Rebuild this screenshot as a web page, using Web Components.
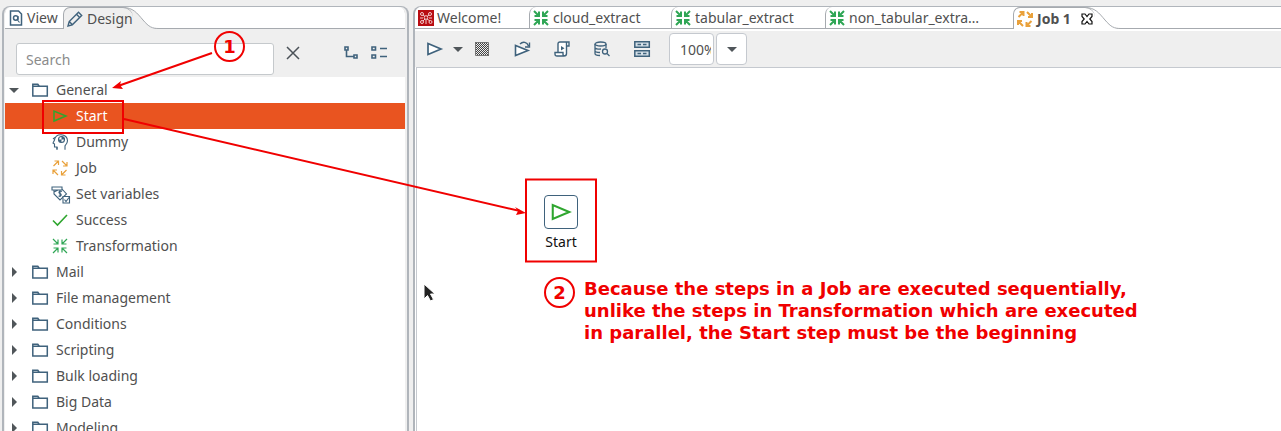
<!DOCTYPE html>
<html lang="en">
<head>
<meta charset="utf-8">
<title>Job designer</title>
<style>
  html, body { height: 100%; }
  body { margin: 0; overflow: hidden; background: #efefef; color: #505050; font: 14px/20px "Noto Sans", "Open Sans", sans-serif; }
</style>
</head>
<body>
<job-designer></job-designer>
<script>
const NAVY = '#3f627c';
const ICONS = {
  folder: `<path d="M.8 14V2.2h5l1.5 2h8V14z M.8 4.2h6" fill="none" stroke="${NAVY}" stroke-width="1.5"/>`,
  start: '<path d="M2 3v10l12-5z" fill="none" stroke="#2fa62f" stroke-width="1.5"/>',
  converge: '<g fill="none" stroke="#2fa655" stroke-width="var(--weight,1.2)"><path d="M1 1l5 5M6 1.5V6H1.5M15 1l-5 5M10 1.5V6h4.5M1 15l5-5M6 14.5V10H1.5M15 15l-5-5M10 14.5V10h4.5"/></g>',
  job: '<g fill="none" stroke="#e9a13b" stroke-width="var(--weight,1.2)"><path d="M1.5 6l5-5M2.5 1h4v4M10 1l5 5M15 2v4h-4M6 15l-5-5M1 14v-4h4M14.5 10l-5 5M9.5 11v4h4"/></g>',
  success: '<path d="M1 8.5l4.500 4.500L15 3" fill="none" stroke="#2fa62f" stroke-width="1.6"/>',
  dummy: `<g fill="none" stroke="${NAVY}" stroke-width="1.1"><path d="M5 16v-3H2.500v-3L1 9l1.500-3C3 2 6 .8 9 .8c4 0 6.500 2.500 6.500 6 0 2.500-1.500 4-2.500 5v4"/><circle cx="9.5" cy="5.5" r="3"/><path d="M5 13v2M3 3.500L1 5"/></g><path d="M9.500 5.500v-3a3 3 0 0 1 3 3zM9.500 5.500v3a3 3 0 0 1-3-3z" fill="${NAVY}"/>`,
  variables: `<g fill="none" stroke="${NAVY}" stroke-width="1.1"><path d="M0 1h10v3H0zM2 4v4l6 6 6.500-6L10 3M2 6l4-2"/><path d="M10 5.500C7 4 6 7 8 7.500s1.500 3.500-1.500 2.500M8 4v7"/><path d="M11 10.500h6.500V17H11z" fill="#fff"/><path d="M12.500 13.500l1.500 2 3-4"/></g>`,
  view: `<g fill="none" stroke="${NAVY}" stroke-width="1.5"><path d="M2.500 1h8l3 3v11h-11z"/><circle cx="7.7" cy="8" r="2.2"/><path d="M9.500 10l2 2.500M10 6v4" stroke-width="1.2"/></g>`,
  pencil: `<path d="M1 15l1.200-4.500L11.500 1.200l3.200 3.200L5.300 13.800zM9.500 3.200l3.200 3.200M2.200 10.500l3 3" fill="none" stroke="${NAVY}" stroke-width="1.4"/>`,
  clear: '<path d="M2 2l12 12M14 2L2 14" stroke="#4b5258" stroke-width="1.5"/>',
  hierarchy: `<g fill="none" stroke="${NAVY}" stroke-width="1.6"><path d="M2 2h3v3H2zM11 10h3v3h-3zM3.500 5v6.500H11"/></g>`,
  list: `<g fill="none" stroke="${NAVY}" stroke-width="1.6"><path d="M1 2h3.500v3H1zM1 10h3.500v3H1zM9 3.500h7M9 11.500h7"/></g>`,
  run: `<path d="M2 2.500v11L15 8z" fill="#fff" stroke="${NAVY}" stroke-width="1.7"/>`,
  replay: `<path d="M1.500 4.500v10l12.500-5z" fill="#fff" stroke="${NAVY}" stroke-width="1.6"/><path d="M6 3c3-3 7-2 8.500 2M15.500 1.500V6H11" fill="none" stroke="${NAVY}" stroke-width="1.4"/>`,
  script: `<path d="M4 11V3q0-2 2-2h9v4h-2.500v7.500q0 2.500-2.500 2.500H3q-2 0-2-2v-1.500h8V13q0 2 1.500 2M12.500 5V1" fill="#fff" stroke="${NAVY}" stroke-width="1.4"/><path d="M7 5v4.500l3.500-2.200z" fill="${NAVY}"/>`,
  database: `<g fill="none" stroke="${NAVY}" stroke-width="1.3"><ellipse cx="6.5" cy="3" rx="5.5" ry="2"/><path d="M1 3v9.500c0 1 2 2 5 2M12 3v4M1 6.500c0 1 3 2 6 1.500M1 9.800c0 1 2 1.700 5 1.700"/><circle cx="11" cy="10.5" r="2.5"/><path d="M13 12.500l2.500 2.500"/></g>`,
  grid: `<g fill="#d5e0e8" stroke="${NAVY}" stroke-width="1.5"><path d="M.8.8h14.500v5.400H.8zM.8 9.800h14.500v5.400H.8z"/><path d="M3.500 3.500H7M9 3.500h3.500M3.500 12.500H7M9 12.500h3.500"/></g>`,
  stop: '<defs><pattern id="p" width="2" height="2" patternUnits="userSpaceOnUse"><path d="M0 0h1v1H0zM1 1h1v1H1z" fill="#444"/></pattern></defs><path d="M1 1h14v14H1z" fill="url(#p)" shape-rendering="crispEdges"/><path d="M1.500 1.500h13v13h-13z" fill="none" stroke="#777"/>',
  down: '<path d="M3 6h10l-5 5z" fill="#50565a"/>',
  right: '<path d="M6 3v10l5-5z" fill="#50565a"/>',
  close: '<path d="M3 3h3l2 2.500L10 3h3v2.500L10.800 8 13 10.500V13h-3L8 10.500 6 13H3v-2.500L5.200 8 3 5.500z" fill="#fff" stroke="#111" stroke-width="1.2"/>',
  welcome: '<path d="M0 0h16v16H0z" fill="#b90d12"/><g fill="none" stroke="#f3cccd"><circle cx="4" cy="4" r="1.5"/><circle cx="12" cy="4" r="1.5"/><circle cx="8" cy="7.5" r="1.8"/><circle cx="4" cy="12" r="1.5"/><circle cx="12.5" cy="12" r="1.5"/><path d="M5 5l2 1.500M11 5L9 6.500M7 9l-2 2M9 9l3 2M2 8h3M11 8h3M8 9.500V14"/></g>'
};

// Registers an element; setup runs on the cloned content before it is connected.
function define(name, css, html, setup) {
  const template = document.createElement('template');
  template.innerHTML = `<style>*{box-sizing:border-box}button{font:inherit;color:inherit;background:none;border:0;padding:0}${css}</style>${html}`;
  customElements.define(name, class extends HTMLElement {
    connectedCallback() {
      if (this.shadowRoot) return;
      const content = template.content.cloneNode(true);
      if (setup) setup(this, content);
      this.attachShadow({ mode: 'open' }).append(content);
    }
  });
}

define('ui-icon', ':host{display:block;flex:none;width:16px;height:16px}svg{display:block;width:100%;height:100%;overflow:visible}',
  '<svg viewBox="0 0 16 16" aria-hidden="true"></svg>',
  (host, root) => { root.querySelector('svg').innerHTML = ICONS[host.getAttribute('name')]; });

define('tab-item', `
  :host{display:flex;flex:none;height:22px;width:var(--tab-width,auto)}
  button{display:flex;align-items:center;gap:4px;padding:0 0 0 3px;flex:1;min-width:0;white-space:nowrap;border-left:1px solid #a6aaaf;border-radius:7px 0 0 0;text-align:left}
  :host([first]) button{border-left-color:transparent;padding-left:1px;gap:3px}
  :host([active]) button{background:var(--fill);border-top:1px solid #a6aaaf;position:relative}
  span{position:relative;z-index:1}
  ui-icon{z-index:1}
  ui-icon.close{margin-left:4px}
  .tail{display:none;flex:none;width:36px;height:22px;margin-left:-10px}
  :host([active]) .tail{display:block}
  :host(:not([closable])) .close{display:none}
  :host([active]){z-index:1}
  :host([active]) button{z-index:1;border-top-right-radius:10px}`,
  `<button role="tab"><ui-icon class="main"></ui-icon><span><slot></slot></span><ui-icon class="close" name="close"></ui-icon></button>
   <svg class="tail" viewBox="0 0 36 22" aria-hidden="true"><path d="M0 .5C10 .5 14 6 20 13S29 21.500 36 21.500L36 22H0z" style="fill:var(--fill)"/><path d="M0 .5C10 .5 14 6 20 13S29 21.500 36 21.500" fill="none" stroke="#a6aaaf"/></svg>`,
  (host, root) => {
    root.querySelector('.main').setAttribute('name', host.getAttribute('icon'));
    root.querySelector('button').setAttribute('aria-selected', host.hasAttribute('active'));
  });

define('tab-bar', `
  :host{display:flex;height:22px;background:#fff;box-shadow:inset 0 -1px #a6aaaf;padding-left:1px;border-radius:7px var(--end-radius,0) 0 0}`,
  '<slot></slot>');

define('tool-button', ':host{display:block;flex:none}button{display:grid;place-items:center;width:20px;height:24px}',
  '<button><ui-icon></ui-icon></button>',
  (host, root) => {
    root.querySelector('ui-icon').setAttribute('name', host.getAttribute('icon'));
    root.querySelector('button').setAttribute('aria-label', host.getAttribute('label'));
  });

define('tree-row', `
  :host{display:flex;align-items:center;height:26px;padding-left:1px;gap:10px}
  :host([child]){padding-left:47px;gap:8px}
  :host([child]) .arrow{display:none}
  :host([selected]){background:#e95420;color:#fff}
  .label{display:flex;align-items:center;gap:8px;white-space:nowrap}`,
  '<ui-icon class="arrow"></ui-icon><div class="label"><ui-icon class="main"></ui-icon><span><slot></slot></span></div>',
  (host, root) => {
    root.querySelector('.arrow').setAttribute('name', host.hasAttribute('open') ? 'down' : 'right');
    root.querySelector('.main').setAttribute('name', host.getAttribute('icon') || 'folder');
    host.setAttribute('role', 'treeitem');
  });

define('design-panel', `
  :host{display:flex;flex-direction:column;min-height:0;border:solid #b0b5bb;border-width:1px 2px 0;border-radius:8px 8px 0 0;padding:0 2px 0 1px;background:#efefef;--fill:#efefef;--end-radius:7px}
  .search{display:flex;align-items:center;height:48px;padding:0 16px 0 11px}
  input{width:258px;height:32px;margin-top:14px;padding:0 9px;border:1px solid #c5c9cc;border-radius:3px;background:#fff;font:inherit;color:#505050;align-self:start}
  input::placeholder{color:#8b8b8b;opacity:1}
  .clear{margin-left:9px}.modes{display:flex;gap:8px;margin-left:auto}
  .tree{flex:1;min-height:0;overflow:hidden;background:#fff}`,
  `<tab-bar role="tablist"><tab-item icon="view" first style="--tab-width:57px">View</tab-item><tab-item icon="pencil" active>Design</tab-item></tab-bar>
  <div class="search"><input type="text" placeholder="Search" aria-label="Search steps"><tool-button class="clear" icon="clear" label="Clear search"></tool-button>
  <div class="modes"><tool-button icon="hierarchy" label="Expand all"></tool-button><tool-button icon="list" label="Collapse all"></tool-button></div></div>
  <div class="tree" role="tree">
  <tree-row open>General</tree-row><tree-row child selected icon="start">Start</tree-row><tree-row child icon="dummy">Dummy</tree-row><tree-row child icon="job">Job</tree-row><tree-row child icon="variables">Set variables</tree-row><tree-row child icon="success">Success</tree-row><tree-row child icon="converge">Transformation</tree-row>
  <tree-row>Mail</tree-row><tree-row>File management</tree-row><tree-row>Conditions</tree-row><tree-row>Scripting</tree-row><tree-row>Bulk loading</tree-row><tree-row>Big Data</tree-row><tree-row>Modeling</tree-row></div>`);

define('canvas-step', `
  :host{display:grid;justify-items:center;gap:3px;width:36px;color:#111}
  .box{display:grid;place-items:center;width:34px;height:34px;border:1px solid #3f627c;border-radius:4px;background:#fff}
  ui-icon{width:22px;height:22px}`,
  '<div class="box"><ui-icon></ui-icon></div><span><slot></slot></span>',
  (host, root) => root.querySelector('ui-icon').setAttribute('name', host.getAttribute('icon')));

define('editor-panel', `
  :host{display:flex;flex-direction:column;min-width:0;min-height:0;border:solid #b0b5bb;border-width:1px 0 0 2px;border-radius:8px 0 0 0;background:#fff;--fill:#fff}
  tab-item{--weight:2}
  .toolbar{display:flex;align-items:center;height:36px;margin-top:2px;padding-left:9px;background:#efefef}
  .zoom{display:flex;gap:2px;margin-left:17px}
  input,.zoom button{height:32px;border:1px solid #c5c9cf;border-radius:4px;background:#fff;font:inherit;color:#505050}
  input{width:45px;padding:0 2px 0 10px}
  .zoom button{width:31px;display:grid;place-items:center}
  .canvas{position:relative;flex:1;margin-left:1px;border:solid #c5c9cf;border-width:1px 0 0 1px;background:#fff}
  canvas-step{position:absolute;left:126px;top:127px}
  .b{margin-left:20px}`,
  `<tab-bar role="tablist"><tab-item icon="welcome" first style="--tab-width:113px">Welcome!</tab-item><tab-item icon="converge" style="--tab-width:142px">cloud_extract</tab-item><tab-item icon="converge" style="--tab-width:154px">tabular_extract</tab-item><tab-item icon="converge" style="--tab-width:188px">non_tabular_extra…</tab-item><tab-item icon="job" active closable><b>Job 1</b></tab-item></tab-bar>
  <div class="toolbar"><tool-button icon="run" label="Run"></tool-button><tool-button icon="down" label="Run options" style="margin-left:4px"></tool-button><tool-button icon="stop" label="Stop" style="margin-left:4px"></tool-button><tool-button class="b" icon="replay" label="Replay"></tool-button><tool-button class="b" icon="script" label="Generate SQL"></tool-button><tool-button class="b" icon="database" label="Explore database"></tool-button><tool-button class="b" icon="grid" label="Show results"></tool-button>
  <div class="zoom"><input type="text" value="100%" aria-label="Zoom"><button aria-label="Zoom levels"><ui-icon name="down"></ui-icon></button></div></div>
  <div class="canvas"><canvas-step icon="start">Start</canvas-step></div>`);

define('guide-overlay', `
  :host{position:absolute;inset:0;z-index:2;pointer-events:none;color:#f00000;font:bold 18px/22px "DejaVu Sans",sans-serif}
  svg{position:absolute;left:0;top:0}
  .number{position:absolute;display:grid;place-items:center;width:31px;height:31px;border:2px solid #f00000;border-radius:50%}
  p{position:absolute;left:584px;top:278px;margin:0;white-space:nowrap}`,
  `<svg width="620" height="320" fill="none" stroke="#f00000" stroke-width="2" aria-hidden="true">
    <path d="M212 53L118 86M124 119l396 92M43 101h80v32H43zM526 179.500h70v82h-70z"/>
    <path d="M112 88l9-7-1 4 3 4zM526 213l-11-6 3 4-2 4z" fill="#f00000" stroke="none"/>
    <path d="M424 284v15l3.500-3.500 3 5.500 3-1.500-3-5.500h4.500z" fill="#222" stroke="#fff" stroke-width="1"/>
  </svg>
  <span class="number" style="left:214px;top:31px">1</span>
  <span class="number" style="left:544px;top:277px">2</span>
  <p>Because the steps in a Job are executed sequentially,<br>unlike the steps in Transformation which are executed<br>in parallel, the Start step must be the beginning</p>`);

define('job-designer', `
  :host{position:relative;display:grid;grid-template-columns:407px minmax(0,1fr);grid-template-rows:minmax(0,1fr);gap:4px;height:100vh;padding:6px 0 0 2px;overflow:hidden;box-sizing:border-box}`,
  '<design-panel></design-panel><editor-panel></editor-panel><guide-overlay></guide-overlay>');
</script>
</body>
</html>
